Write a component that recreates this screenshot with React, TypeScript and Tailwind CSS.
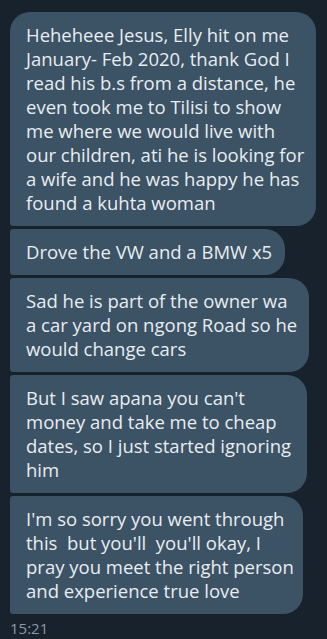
import React from 'react';

const messages: { lines: string[]; width: string; rounded: string }[] = [
  {
    lines: [
      'Heheheee Jesus, Elly hit on me',
      'January- Feb 2020, thank God I',
      'read his b.s from a distance, he',
      'even took me to Tilisi to show',
      'me where we would live with',
      'our children, ati he is looking for',
      'a wife and he was happy he has',
      'found a kuhta woman',
    ],
    width: 'w-[306px]',
    rounded: 'rounded-tl-[20px] rounded-r-[20px] rounded-bl-[3px]',
  },
  {
    lines: ['Drove the VW and a BMW x5'],
    width: 'w-[275px]',
    rounded: 'rounded-l-[3px] rounded-r-[20px]',
  },
  {
    lines: ['Sad he is part of the owner wa', 'a car yard on ngong Road so he', 'would change cars'],
    width: 'w-[299px]',
    rounded: 'rounded-l-[3px] rounded-r-[20px]',
  },
  {
    lines: ['But I saw apana you can\'t', 'money and take me to cheap', 'dates, so I just started ignoring', 'him'],
    width: 'w-[297px]',
    rounded: 'rounded-l-[3px] rounded-r-[20px]',
  },
  {
    lines: [
      'I\'m so sorry you went through',
      'this  but you\'ll  you\'ll okay, I',
      'pray you meet the right person',
      'and experience true love',
    ],
    width: 'w-[293px]',
    rounded: 'rounded-l-[3px] rounded-r-[20px]',
  },
];

function Bubble({ lines, width, rounded }: { lines: string[]; width: string; rounded: string }) {
  return (
    <div className={`${width} ${rounded} bg-[#3c5265] pl-4 pr-2 py-[11px]`}>
      {lines.map((line, i) => (
        <div key={i} className="whitespace-pre text-[18.5px] leading-[24px] text-[#e8edf1]">
          {line}
        </div>
      ))}
    </div>
  );
}

export default function App() {
  return (
    <div
      className="w-[327px] h-[639px] overflow-hidden bg-[#18222d] pl-[10px] pt-3"
      style={{ fontFamily: '"Open Sans", Roboto, sans-serif' }}
    >
      <div className="flex flex-col gap-[3px]">
        {messages.map((m, i) => (
          <Bubble key={i} {...m} />
        ))}
      </div>
      <div className="mt-1 text-[15px] leading-[20px] text-[#8b99a7]">15:21</div>
    </div>
  );
}
